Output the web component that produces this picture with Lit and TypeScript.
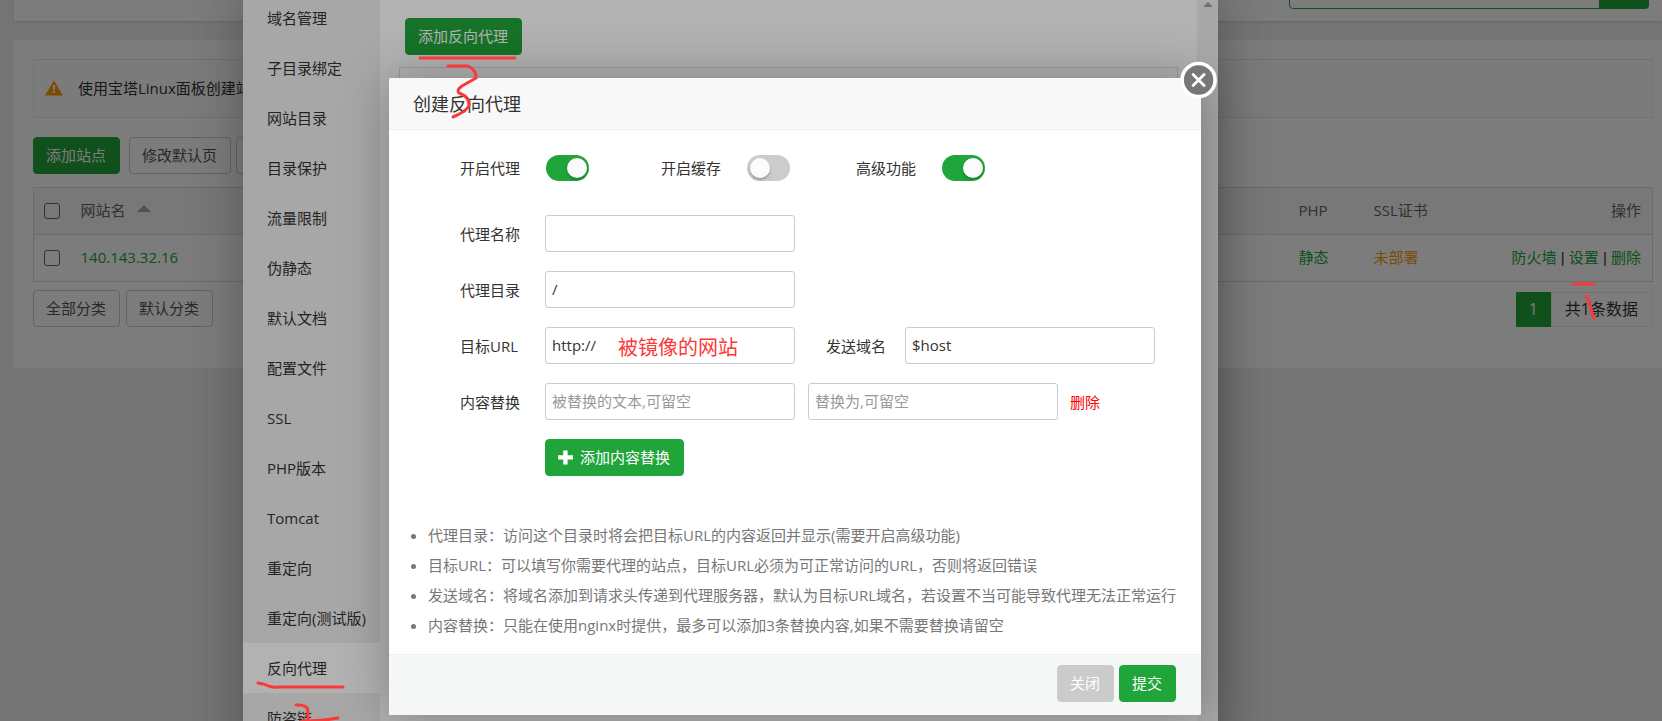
import { LitElement, html, css, svg } from "lit";
import { customElement, state } from "lit/decorators.js";

const MENU = [
  "域名管理", "子目录绑定", "网站目录", "目录保护", "流量限制", "伪静态", "默认文档",
  "配置文件", "SSL", "PHP版本", "Tomcat", "重定向", "重定向(测试版)", "反向代理", "防盗链",
];

const HINTS = [
  "代理目录：访问这个目录时将会把目标URL的内容返回并显示(需要开启高级功能)",
  "目标URL：可以填写你需要代理的站点，目标URL必须为可正常访问的URL，否则将返回错误",
  "发送域名：将域名添加到请求头传递到代理服务器，默认为目标URL域名，若设置不当可能导致代理无法正常运行",
  "内容替换：只能在使用nginx时提供，最多可以添加3条替换内容,如果不需要替换请留空",
];

const controls = css`
  * { box-sizing: border-box; }
  button, input { font: inherit; color: inherit; margin: 0; }
  a { color: #20a53a; text-decoration: none; }
  .btn {
    height: 37px;
    padding: 0 13px 1px 12px;
    border: 1px solid #ccc;
    border-radius: 4px;
    background: #fff;
    color: #555;
    white-space: nowrap;
  }
  .btn.primary { background: #20a53a; border-color: #20a53a; color: #fff; font-weight: 400; }
  .btn.muted { background: #cbcbcb; border-color: #cbcbcb; color: #fff; font-weight: 400; }
`;

@customElement("site-list")
export class SiteList extends LitElement {
  static styles = [controls, css`
    :host { display: block; padding-left: 14px; }
    .top {
      display: flex;
      justify-content: flex-end;
      align-items: flex-end;
      height: 21px;
      padding: 0 13px 12px 0;
      background: #fff;
      box-shadow: 0 1px 2px rgba(0, 0, 0, 0.15);
    }
    .search { display: flex; height: 37px; }
    .search input {
      width: 311px;
      border: 1px solid #20a53a;
      border-radius: 4px 0 0 4px;
      background: #fff;
      outline: none;
    }
    .search button {
      width: 49px;
      border: 0;
      border-radius: 0 4px 4px 0;
      background: #20a53a;
    }
    .panel { margin-top: 19px; padding: 19px 9px 41px 19px; background: #fff; }
    .notice {
      display: flex;
      align-items: center;
      gap: 15px;
      height: 59px;
      padding: 0 11px 2px;
      border: 1px solid #e8e8e8;
      background: #fdfdfd;
      color: #333;
    }
    .tools { display: flex; gap: 5px; margin: 19px 0 13px; }
    .tools .primary { margin-right: 4px; }
    .blank { width: 88px; }
    table {
      width: 100%;
      table-layout: fixed;
      border-collapse: collapse;
      border: 1px solid #ddd;
    }
    th, td {
      height: 47px;
      padding: 0 11px 2px;
      border-bottom: 1px solid #ddd;
      text-align: left;
      font-weight: inherit;
      color: #333;
    }
    th { background: #f6f6f6; color: #666; }
    .pick { width: 36px; padding: 0 0 0 10px; }
    .php { width: 75px; }
    .ssl { width: 100px; }
    .ops { width: 190px; text-align: right; white-space: nowrap; }
    .sep { font-family: "Liberation Sans", sans-serif; }
    .sort {
      display: inline-block;
      margin-left: 8px;
      border: 7px solid transparent;
      border-top: 0;
      border-bottom-color: #aaa;
      vertical-align: 4px;
    }
    .warn { color: #fc9a0a; }
    input[type="checkbox"] {
      display: block;
      appearance: none;
      width: 16px;
      height: 16px;
      border: 1px solid #666;
      border-radius: 3px;
    }
    .foot { display: flex; justify-content: space-between; margin-top: 8px; }
    .group { display: flex; gap: 6px; }
    .pager {
      display: flex;
      height: 35px;
      margin-top: 2px;
      line-height: 35px;
      font-size: 16px;
    }
    .page { width: 35px; background: #20a53a; color: #fff; text-align: center; }
    .total { padding: 0 14px 0 13px; border: 1px solid #ececec; line-height: 33px; color: #333; }
  `];

  render() {
    const sep = html`<span class="sep"> | </span>`;
    return html`
      <header class="top">
        <div class="search">
          <input type="text" aria-label="网站搜索" /><button aria-label="搜索"></button>
        </div>
      </header>
      <main class="panel">
        <div class="notice">
          <svg width="18" height="16" viewBox="0 0 18 16" aria-hidden="true">
            <path d="M9 0.5 18 15.5H0Z" fill="#fc9a0a" />
            <path d="M7.700 5h2.600l-.5 5H8.200ZM8 11h2v2H8Z" fill="#fff" />
          </svg>
          <span>使用宝塔Linux面板创建站</span>
        </div>
        <div class="tools">
          <button class="btn primary">添加站点</button>
          <button class="btn">修改默认页</button>
          <button class="btn blank" aria-label="默认站点"></button>
        </div>
        <table>
          <thead>
            <tr>
              <th class="pick"><input type="checkbox" aria-label="全选" /></th>
              <th>网站名 <span class="sort"></span></th>
              <th class="php">PHP</th>
              <th class="ssl">SSL证书</th>
              <th class="ops">操作</th>
            </tr>
          </thead>
          <tbody>
            <tr>
              <td class="pick"><input type="checkbox" aria-label="140.143.32.16" /></td>
              <td><a href="#">140.143.32.16</a></td>
              <td><a href="#">静态</a></td>
              <td><a class="warn" href="#">未部署</a></td>
              <td class="ops"><a href="#">防火墙</a>${sep}<a href="#">设置</a>${sep}<a href="#">删除</a></td>
            </tr>
          </tbody>
        </table>
        <div class="foot">
          <div class="group">
            <button class="btn">全部分类</button>
            <button class="btn">默认分类</button>
          </div>
          <div class="pager"><span class="page">1</span><span class="total">共1条数据</span></div>
        </div>
      </main>
    `;
  }
}

@customElement("site-window")
export class SiteWindow extends LitElement {
  static styles = [controls, css`
    :host {
      display: flex;
      background: #fff;
      box-shadow: 1px 1px 50px rgba(0, 0, 0, 0.3);
    }
    nav { display: flex; flex-direction: column; flex: 0 0 137px; background: #f0f0f1; }
    nav a { padding-left: 24px; line-height: 50px; white-space: nowrap; color: #333; }
    nav a.on { background: #fff; }
    .body { flex: 1; padding: 25px 19px; }
    .body .btn { margin-left: 6px; }
    .list { height: 640px; margin-top: 12px; border: 1px solid #ddd; }
    .bar {
      display: flex;
      justify-content: center;
      flex: 0 0 21px;
      padding-top: 9px;
      background: #f1f1f1;
    }
    .bar i {
      height: 5px;
      border: 5px solid transparent;
      border-top: 0;
      border-bottom-color: #a3a3a3;
    }
  `];

  render() {
    return html`
      <nav>${MENU.map((m) => html`<a href="#" class=${m === "反向代理" ? "on" : ""}>${m}</a>`)}</nav>
      <div class="body">
        <button class="btn primary">添加反向代理</button>
        <div class="list"></div>
      </div>
      <div class="bar"><i></i></div>
    `;
  }
}

@customElement("proxy-dialog")
export class ProxyDialog extends LitElement {
  @state() private hints = HINTS;

  static styles = [controls, css`
    :host {
      display: block;
      background: #fff;
      border-radius: 2px;
      box-shadow: 1px 1px 50px rgba(0, 0, 0, 0.3);
      color: #333;
    }
    h2 {
      margin: 0;
      height: 52px;
      padding-left: 24px;
      border-bottom: 1px solid #eee;
      border-radius: 2px 2px 0 0;
      background: #f8f8f8;
      font-size: 18px;
      font-weight: inherit;
      line-height: 52px;
    }
    .close {
      position: absolute;
      top: -17px;
      right: -17px;
      width: 38px;
      height: 38px;
      padding: 0;
      border: 0;
      background: none;
    }
    .close svg { display: block; }
    form { display: flex; flex-direction: column; gap: 19px; padding: 25px 0 44px 71px; }
    .row { display: flex; align-items: center; height: 37px; }
    .row > label:first-child { width: 60px; margin-right: 25px; }
    .toggles { height: 26px; margin-bottom: 15px; }
    .toggles > label:first-child { margin-right: 26px; }
    .toggles label:not(:first-child) { margin: 0 26px 0 72px; }
    .toggles .far:not(:first-child) { margin-left: 66px; }
    .toggle {
      appearance: none;
      width: 43px;
      height: 26px;
      padding: 3px;
      border-radius: 13px;
      background: #ccc;
    }
    .toggle::before {
      content: "";
      display: block;
      width: 20px;
      height: 20px;
      border-radius: 50%;
      background: #fbfbfb;
      box-shadow: 0 2px 3px rgba(0, 0, 0, 0.25);
    }
    .toggle:checked { background: #20a53a; }
    .toggle:checked::before { margin-left: 18px; }
    .field {
      width: 250px;
      height: 37px;
      padding: 0 6px 1px;
      border: 1px solid #ccc;
      border-radius: 3px;
      background: #fff;
      outline: none;
    }
    .field::placeholder { color: #999; opacity: 1; }
    .host { margin: 0 19px 0 31px; }
    .second { margin: 0 12px 0 13px; }
    .del { color: #f00; }
    .add { display: flex; align-items: center; gap: 7px; margin-left: 85px; }
    ul {
      margin: 0;
      padding: 0 0 14px 39px;
      line-height: 30px;
      color: #777;
      white-space: nowrap;
    }
    footer {
      display: flex;
      justify-content: flex-end;
      gap: 5px;
      padding: 10px 25px 13px;
      border-top: 1px solid #edf1f2;
      border-radius: 0 0 2px 2px;
      background: #f6f8f8;
    }
  `];

  render() {
    return html`
      <h2>创建反向代理</h2>
      <button class="close" aria-label="关闭窗口">
        <svg width="38" height="38" viewBox="0 0 38 38">
          <circle cx="18.6" cy="19" r="16.5" fill="#777" stroke="#fff" stroke-width="3.6" />
          <path d="M13.1 13.5 24.1 24.5M24.1 13.5 13.1 24.5" stroke="#fff" stroke-width="2.8" stroke-linecap="round" />
        </svg>
      </button>
      <form>
        <div class="row toggles">
          <label for="on">开启代理</label><input id="on" class="toggle" type="checkbox" checked />
          <label for="cache">开启缓存</label><input id="cache" class="toggle" type="checkbox" />
          <label class="far" for="adv">高级功能</label><input id="adv" class="toggle" type="checkbox" checked />
        </div>
        <div class="row">
          <label for="name">代理名称</label><input id="name" class="field" type="text" />
        </div>
        <div class="row">
          <label for="dir">代理目录</label><input id="dir" class="field" type="text" value="/" />
        </div>
        <div class="row">
          <label for="url">目标URL</label><input id="url" class="field" type="text" value="http://" />
          <label class="host" for="host">发送域名</label><input id="host" class="field" type="text" value="$host" />
        </div>
        <div class="row">
          <label for="from">内容替换</label>
          <input id="from" class="field" type="text" placeholder="被替换的文本,可留空" />
          <input class="field second" type="text" aria-label="替换为" placeholder="替换为,可留空" />
          <a class="del" href="#">删除</a>
        </div>
        <div class="row">
          <button type="button" class="btn primary add">
            <svg width="15" height="15" viewBox="0 0 15 15" aria-hidden="true">
              <path d="M5.200 0.500h4.400v4.800H15v4.200H9.600v5H5.200v-5H0V5.300h5.200Z" fill="#fff" />
            </svg>添加内容替换
          </button>
        </div>
      </form>
      <ul>${this.hints.map((h) => html`<li>${h}</li>`)}</ul>
      <footer>
        <button class="btn muted">关闭</button>
        <button class="btn primary">提交</button>
      </footer>
    `;
  }
}

const STROKES = [
  "M420 58H515",
  "M448 66H468Q477 71 476 78L462 86Q456 90 459 93Q470 97 469 106Q465 112 453 117",
  "M258 683Q265 684 270 686.5Q274 687.5 280 687H343",
  "M296 705Q308 704 308 712V721M302 721Q322 721 338 718",
  "M1573 284H1594",
  "M1586 296 1590 304 1592 314 1594 318",
];

@customElement("app-root")
export class AppRoot extends LitElement {
  static styles = css`
    :host {
      display: block;
      position: relative;
      height: 100vh;
      overflow: hidden;
      background: #f0f0f1;
      font-family: "Open Sans", "Noto Sans CJK SC", sans-serif;
      font-size: 15px;
      line-height: 20px;
      font-weight: 380;
    }
    .mask { position: absolute; inset: 0; background: rgba(0, 0, 0, 0.3); }
    .site { position: absolute; top: -7px; bottom: -60px; left: 243px; width: 975px; }
    .proxy { position: absolute; top: 78px; left: 389px; width: 812px; }
    .ink {
      position: absolute;
      inset: 0;
      width: 100%;
      height: 100%;
      pointer-events: none;
      fill: none;
      stroke: #fb3838;
      stroke-width: 3px;
      stroke-linecap: round;
      stroke-linejoin: round;
    }
    .remark {
      position: absolute;
      top: 334px;
      left: 618px;
      font-size: 20px;
      line-height: 28px;
      color: #fb3838;
    }
  `;

  render() {
    return html`
      <site-list></site-list>
      <div class="mask"></div>
      <site-window class="site"></site-window>
      <div class="mask"></div>
      <proxy-dialog class="proxy"></proxy-dialog>
      <span class="remark">被镜像的网站</span>
      <svg class="ink" aria-hidden="true">${STROKES.map((d) => svg`<path d=${d} />`)}</svg>
    `;
  }
}
